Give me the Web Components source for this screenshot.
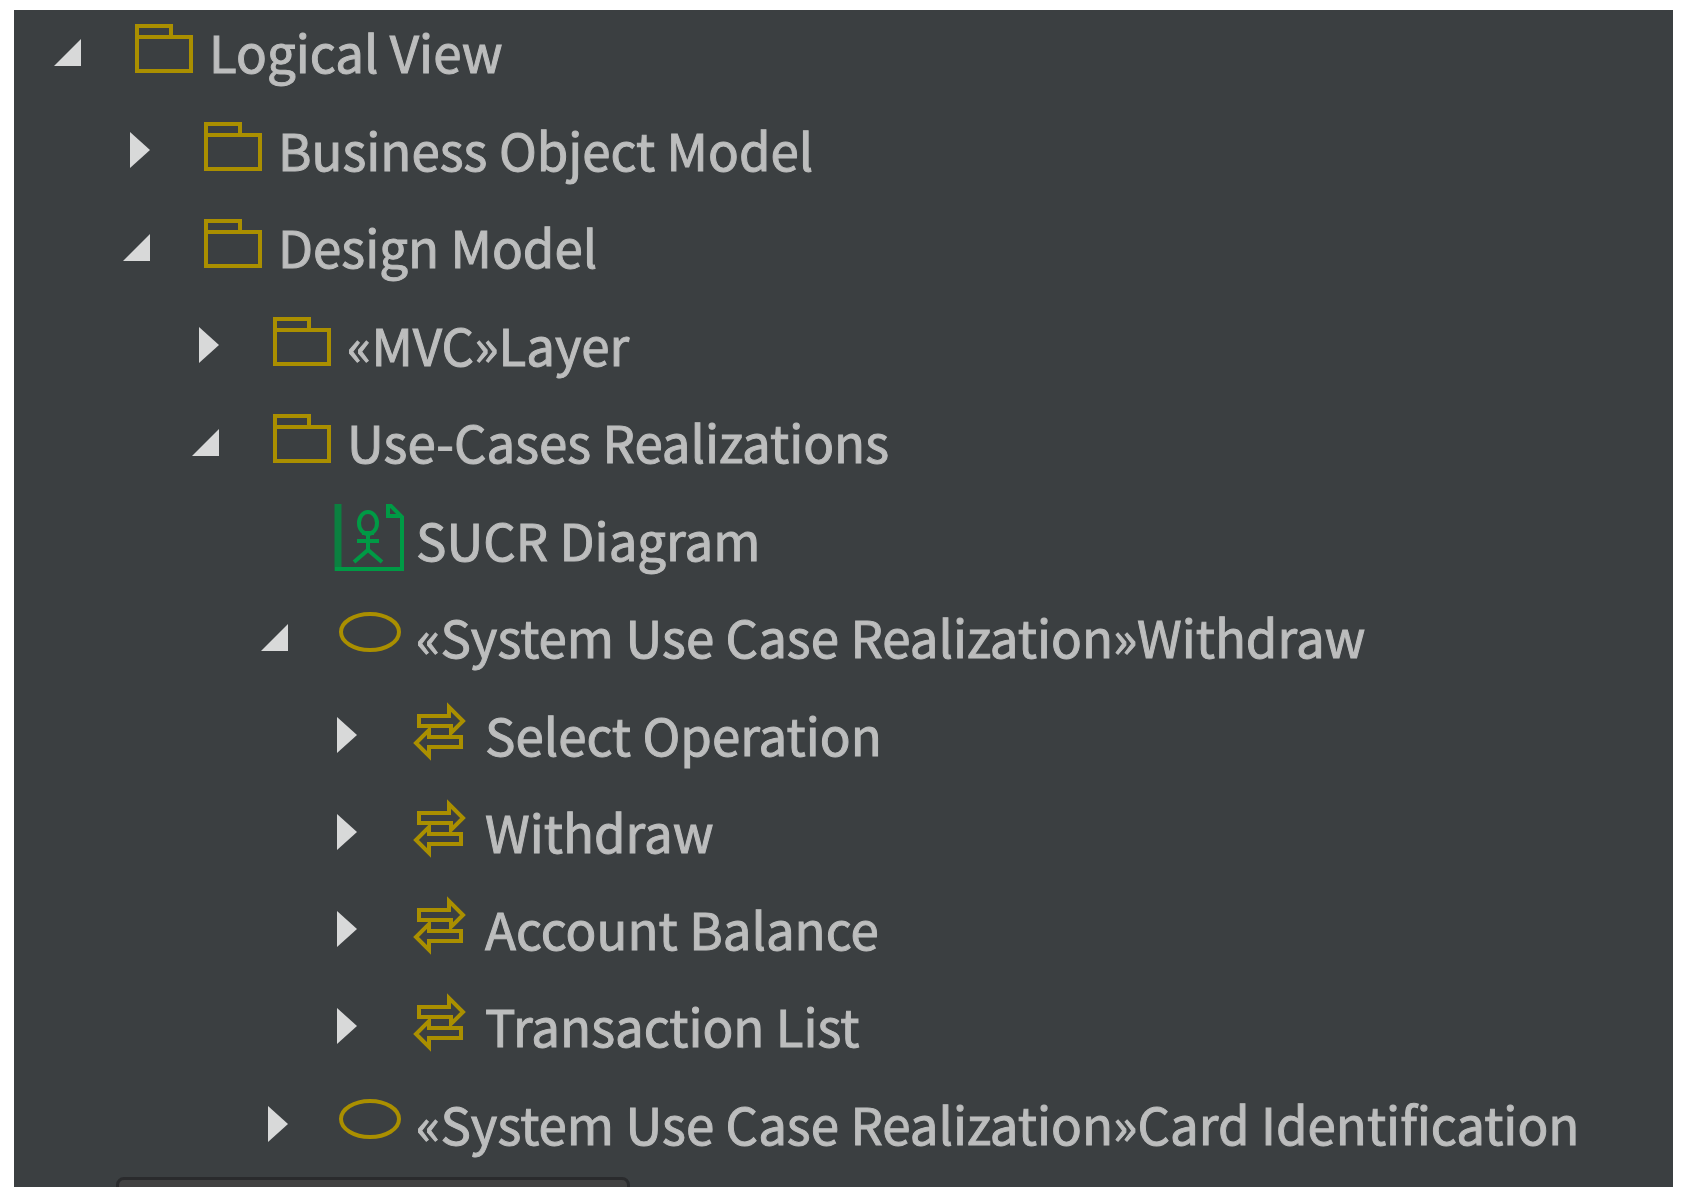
<!DOCTYPE html>
<html lang="en">
<head>
<meta charset="utf-8">
<title>Model Explorer</title>
<style>
  body {
    box-sizing: border-box;
    display: flex;
    height: 100vh;
    margin: 0;
    padding: 10px 17px 12px 14px;
    background: #fff;
    color: #bcbdbd;
    font: 51px "Noto Sans CJK SC", "Noto Sans", sans-serif;
  }
</style>
</head>
<body>
<model-explorer>
  <tree-node icon="folder" label="Logical View" expanded>
    <tree-node icon="folder" label="Business Object Model"></tree-node>
    <tree-node icon="folder" label="Design Model" expanded>
      <tree-node icon="folder" label="«MVC»Layer"></tree-node>
      <tree-node icon="folder" label="Use-Cases Realizations" expanded>
        <tree-node icon="diagram" label="SUCR Diagram" leaf></tree-node>
        <tree-node icon="usecase" label="«System Use Case Realization»Withdraw" expanded>
          <tree-node icon="interaction" label="Select Operation"></tree-node>
          <tree-node icon="interaction" label="Withdraw"></tree-node>
          <tree-node icon="interaction" label="Account Balance"></tree-node>
          <tree-node icon="interaction" label="Transaction List"></tree-node>
        </tree-node>
        <tree-node icon="usecase" label="«System Use Case Realization»Card Identification"></tree-node>
      </tree-node>
    </tree-node>
  </tree-node>
</model-explorer>

<script>
const icons = {
  folder: `
    <path d="M11 26V11h34v11"/>
    <path d="M11 22h54v34H11z"/>`,
  usecase: '<ellipse cx="37" cy="32" rx="29" ry="18"/>',
  interaction: `
    <path d="M17 18H47V9L61 23L49 35V28H17z"/>
    <path d="M59 39H27V32L14 45L27 58V49H59z"/>`,
  diagram: `
    <path d="M5 1V68" stroke-width="7" stroke="#0b8040"/>
    <path d="M2 66H69V14L58 3H55V13H69"/>
    <ellipse cx="35" cy="20" rx="9" ry="11"/>
    <path d="M35 29V47M24 38H46M21 59L35 47L49 59M29 30H41"/>`,
};

class TreeIcon extends HTMLElement {
  constructor() {
    super();
    this.attachShadow({ mode: 'open' });
  }

  connectedCallback() {
    this.shadowRoot.innerHTML = `
      <style>
        :host {
          display: block;
          flex: none;
          width: 72px;
          height: 72px;
          color: #aa8f00;
        }

        :host([name="diagram"]) {
          color: #009a45;
        }

        svg {
          display: block;
          fill: none;
          stroke: currentColor;
          stroke-width: 4;
        }
      </style>
      <svg width="72" height="72" viewBox="0 0 72 72" aria-hidden="true">${icons[this.getAttribute('name')]}</svg>
    `;
  }
}

customElements.define('tree-icon', TreeIcon);

class TreeNode extends HTMLElement {
  constructor() {
    super();
    this.attachShadow({ mode: 'open' });
  }

  connectedCallback() {
    this.setAttribute('role', 'treeitem');
    this.render();
  }

  toggle() {
    this.toggleAttribute('expanded');
    this.render();
  }

  render() {
    const label = this.getAttribute('label');
    const expanded = this.hasAttribute('expanded');
    const arrow = expanded ? 'M35 24V51H8z' : 'M15 19L35 37L15 55z';

    this.shadowRoot.innerHTML = `
      <style>
        :host {
          display: block;
        }

        .row {
          box-sizing: border-box;
          display: flex;
          height: 97px;
          padding-top: 5px;
        }

        button {
          flex: none;
          width: 48px;
          height: 72px;
          margin: 0 32px 0 0;
          padding: 0;
          border: 0;
          background: none;
          cursor: pointer;
        }

        :host([leaf]) button {
          visibility: hidden;
        }

        button svg {
          display: block;
          fill: #d8d9d9;
        }

        .label {
          margin-left: 11px;
          line-height: 72px;
          white-space: nowrap;
          -webkit-text-stroke: 1px;
        }

        .children {
          margin: 1px 0 1px 69px;
        }

        .children[hidden] {
          display: none;
        }
      </style>
      <div class="row">
        <button type="button" aria-expanded="${expanded}" aria-label="Toggle ${label}">
          <svg width="48" height="72" viewBox="0 0 48 72"><path d="${arrow}"/></svg>
        </button>
        <tree-icon name="${this.getAttribute('icon')}"></tree-icon>
        <span class="label">${label}</span>
      </div>
      <div class="children" role="group" ${expanded ? '' : 'hidden'}><slot></slot></div>
    `;
    this.shadowRoot.querySelector('button').addEventListener('click', () => this.toggle());
  }
}

customElements.define('tree-node', TreeNode);

class ModelExplorer extends HTMLElement {
  constructor() {
    super();
    this.attachShadow({ mode: 'open' }).innerHTML = `
      <style>
        :host {
          display: block;
          flex: 1;
          min-width: 0;
          overflow: hidden;
          background: #3b3f41;
        }

        .tree {
          padding-left: 32px;
        }

        .panel {
          box-sizing: border-box;
          width: 514px;
          height: 80px;
          margin: -3px 0 0 102px;
          border: 3px solid #2a2b2d;
          border-radius: 8px;
          background: #414141;
        }
      </style>
      <div class="tree" role="tree"><slot></slot></div>
      <div class="panel"></div>
    `;
  }
}

customElements.define('model-explorer', ModelExplorer);
</script>
</body>
</html>
